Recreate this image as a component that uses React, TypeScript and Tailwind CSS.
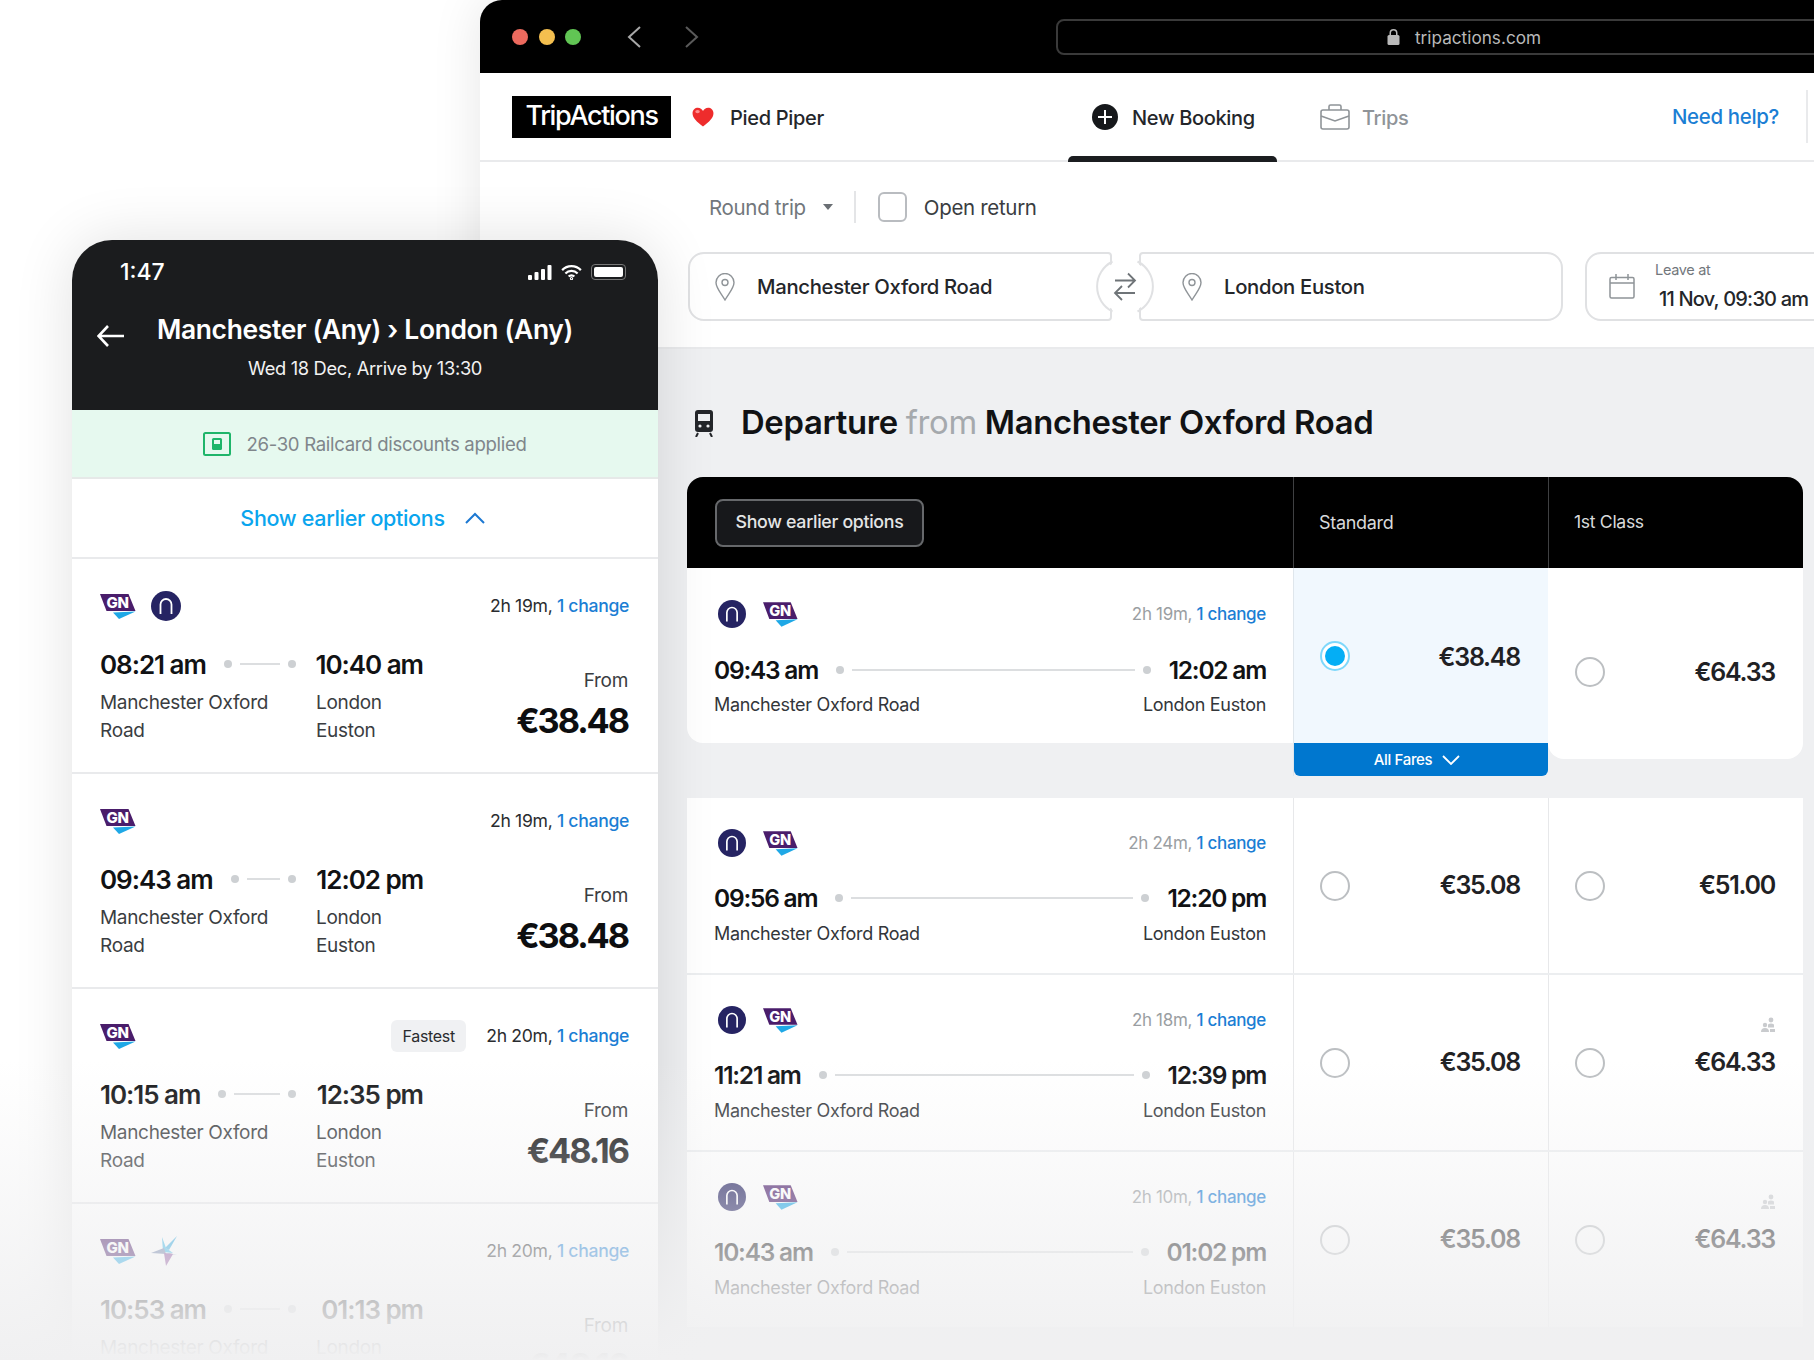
import React from "react";

const GN = ({ className = "w-[36px] h-[25px]" }: { className?: string }) => (
  <svg viewBox="0 0 36 25" className={className}>
    <polygon points="0,0 28.5,0 35.5,17 6.5,17" fill="#4a1d6b" />
    <polygon points="13,18.500 35.5,17.500 19,25" fill="#1fa8e6" />
    <text x="17.500" y="14" textAnchor="middle" fontSize="15" fontWeight="800" fill="#fff" fontFamily="Inter, sans-serif">GN</text>
  </svg>
);

const NR = ({ className = "w-[28px] h-[28px]" }: { className?: string }) => (
  <svg viewBox="0 0 30 30" className={className}>
    <circle cx="15" cy="15" r="15" fill="#262463" />
    <path d="M9.5 23V13.5a5.5 5.5 0 0 1 11 0V23" fill="none" stroke="#fff" strokeWidth="1.8" />
  </svg>
);

const Star = () => (
  <svg viewBox="0 0 26 30" className="w-[26px] h-[30px]">
    <polygon points="26,0 18,14 14,12" fill="#2aa7e0" />
    <polygon points="11,1 15,12 22,17 12,16" fill="#35b6e8" />
    <polygon points="0,17 13,12 15,18" fill="#6b7fa8" />
    <polygon points="14,17 26,19 18,17" fill="#5c6fa5" />
    <polygon points="15,30 13,17 22,18" fill="#8a4b9a" />
  </svg>
);

const Pin = () => (
  <svg viewBox="0 0 20 28" className="w-[20px] h-[28px] shrink-0" fill="none" stroke="#8f9498" strokeWidth="1.4">
    <path d="M10 27C6 20 1 15 1 9.5a9 9 0 0 1 18 0C19 15 14 20 10 27Z" />
    <circle cx="10" cy="9.5" r="3" />
  </svg>
);

const Dur = ({ d, muted }: { d: string; muted?: boolean }) => (
  <span className={muted ? "text-[#9a9ea2]" : "text-[#2a2c2f]"}>
    {d}, <span className="text-[#1b7ed4] font-medium">1 change</span>
  </span>
);

const Radio = ({ on }: { on?: boolean }) =>
  on ? (
    <span className="w-[30px] h-[30px] mt-[1px] rounded-full border-[2px] border-[#7fd8fb] bg-white flex items-center justify-center">
      <span className="w-[20px] h-[20px] rounded-full bg-[#04aef5]" />
    </span>
  ) : (
    <span className="w-[30px] h-[30px] rounded-full border-[2px] border-[#bcbfc2] bg-white" />
  );

const Seats = () => (
  <svg viewBox="0 0 16 16" className="w-[16px] h-[16px] absolute top-[42px] right-[27px]" fill="#c9cbce">
    <circle cx="11" cy="3" r="2.4" />
    <path d="M8 7.5q3-2 6 0v3H8Z" />
    <circle cx="5" cy="8" r="2.2" />
    <path d="M1 15q0-4 4-4t4 4Z" />
    <path d="M10 15v-3h5v3Z" />
  </svg>
);

const Trip = ({ d, a, b, tight }: { d: string; a: string; b: string; tight?: boolean }) => (
  <div className={tight ? "px-[27px] pt-[30px] h-full" : "px-[27px] pt-[31px] h-full"}>
    <div className="flex items-center justify-between h-[30px]">
      <div className="flex items-center gap-[17px] pl-[4px]">
        <NR />
        <GN className="w-[35px] h-[25px]" />
      </div>
      <div className="text-[17px] mt-[1px]"><Dur d={d} muted /></div>
    </div>
    <div className={tight ? "flex items-center mt-[26px] h-[28px]" : "flex items-center mt-[27px] h-[28px]"}>
      <span className="text-[24.500px] tracking-[-0.05em] font-semibold text-[#111214]">{a}</span>
      <span className="w-[8px] h-[8px] rounded-full bg-[#cdd0d3] ml-[18px]" />
      <span className="flex-1 h-[2px] bg-[#dcdee0] mx-[8px]" />
      <span className="w-[8px] h-[8px] rounded-full bg-[#cdd0d3] mr-[18px]" />
      <span className="text-[24.500px] tracking-[-0.05em] font-semibold text-[#111214]">{b}</span>
    </div>
    <div className={tight ? "flex justify-between mt-[10px] text-[18px] leading-[24px] text-[#33363a]" : "flex justify-between mt-[9px] text-[18px] leading-[24px] text-[#33363a]"}>
      <span>Manchester Oxford Road</span>
      <span>London Euston</span>
    </div>
  </div>
);

const Price = ({ v, lift }: { v: string; lift?: boolean }) => (
  <span className={lift ? "mt-[4px] text-[25px] tracking-[-0.05em] font-semibold text-[#1f2124]" : "mt-[1px] text-[25px] tracking-[-0.05em] font-semibold text-[#1f2124]"}>€{v}</span>
);

const Row = ({ d, a, b, s, f, seats }: { d: string; a: string; b: string; s: string; f: string; seats?: boolean }) => (
  <div className="flex h-[177px] bg-white border-b-2 border-[#eceef0]">
    <div className="w-[606px]"><Trip tight d={d} a={a} b={b} /></div>
    <div className="w-[255px] border-l border-[#e7e8ea] flex items-center justify-between pl-[26px] pr-[28px]">
      <Radio />
      <Price v={s} />
    </div>
    <div className="relative w-[255px] border-l border-[#e7e8ea] flex items-center justify-between pl-[26px] pr-[28px]">
      {seats && <Seats />}
      <Radio />
      <Price v={f} />
    </div>
  </div>
);

const Card = ({ logos, badge, d, a, b, price }: { logos: React.ReactNode; badge?: boolean; d: string; a: string; b: string; price: string }) => (
  <div className="h-[215px] border-b-2 border-[#e9eaec] pl-[28px] pr-[29px] pt-[30px] bg-white">
    <div className="flex items-center h-[34px]">
      <div className="flex items-center gap-[15px] flex-1">{logos}</div>
      {badge && <span className="bg-[#f0f1f3] rounded-[6px] h-[32px] w-[75px] flex items-center justify-center text-[16px] text-[#2a2c2f] mr-[20px]">Fastest</span>}
      <span className="text-[17.600px] mt-[1px]"><Dur d={d} /></span>
    </div>
    <div className="flex justify-between">
      <div className="w-[323px]">
        <div className="flex items-center mt-[23px] h-[36px]">
          <span className="text-[26px] tracking-[-0.04em] font-semibold text-[#111214]">{a}</span>
          <span className="flex-1 flex items-center justify-center pl-[18px]">
            <span className="w-[8px] h-[8px] rounded-full bg-[#cdd0d3]" />
            <span className="flex-1 h-[2px] bg-[#dcdee0] mx-[8px]" />
            <span className="w-[8px] h-[8px] rounded-full bg-[#cdd0d3]" />
          </span>
          <span className="w-[127px] pl-[16px] text-right text-[26px] tracking-[-0.04em] font-semibold text-[#111214] whitespace-nowrap">{b}</span>
        </div>
        <div className="flex mt-[7px] text-[19px] leading-[28px] text-[#3a3d41]">
          <span className="w-[216px]">Manchester Oxford<br />Road</span>
          <span>London<br />Euston</span>
        </div>
      </div>
      <div className="text-right pt-[44px] pr-[1px]">
        <div className="text-[19px] leading-[28px] text-[#3a3d41]">From</div>
        <div className="text-[34.300px] tracking-[-0.06em] leading-[46px] mt-[3px] font-bold text-[#0d0e10]">€{price}</div>
      </div>
    </div>
  </div>
);

export default function App() {
  return (
    <div className="relative w-[1814px] h-[1360px] overflow-hidden bg-white font-[Inter,sans-serif] tracking-[-0.02em]">
      {/* Browser window */}
      <div className="absolute left-[480px] top-0 w-[1400px] h-[1360px] rounded-tl-[22px] overflow-hidden flex flex-col shadow-[0_0_50px_rgba(0,0,0,0.1)] bg-white">
        <div className="h-[73px] shrink-0 bg-black flex items-center pl-[32px]">
          <div className="flex gap-[10.5px]">
            <span className="w-[16px] h-[16px] rounded-full bg-[#ec6a5e]" />
            <span className="w-[16px] h-[16px] rounded-full bg-[#f4bf4f]" />
            <span className="w-[16px] h-[16px] rounded-full bg-[#61c554]" />
          </div>
          <svg viewBox="0 0 14 22" className="w-[14px] h-[22px] ml-[46px]" fill="none" stroke="#a8a8a8" strokeWidth="2"><path d="M13 1 2 11l11 10" /></svg>
          <svg viewBox="0 0 14 22" className="w-[14px] h-[22px] ml-[44px]" fill="none" stroke="#5a5a5a" strokeWidth="2"><path d="m1 1 11 10L1 21" /></svg>
          <div className="ml-[357px] w-[816px] h-[36px] shrink-0 rounded-[8px] border-2 border-[#3a3a3a] flex items-center justify-center gap-[15px] text-[#b9b9b9] text-[17.200px] tracking-normal">
            <svg viewBox="0 0 13 16" className="w-[13px] h-[16px]" fill="#b9b9b9"><path d="M2.5 6V4a4 4 0 0 1 8 0v2h-1.5V4a2.5 2.5 0 0 0-5 0v2Z" /><rect x="0.5" y="6" width="12" height="10" rx="1.5" /></svg>
            <span className="mt-[2px]">tripactions.com</span>
          </div>
        </div>

        <div className="h-[89px] shrink-0 border-b-2 border-[#e9eaec] flex items-center pl-[32px]">
          <div className="w-[556px] shrink-0 flex items-center">
            <div className="w-[159px] h-[42px] bg-black text-white text-[27px] font-medium flex items-center justify-center tracking-[-0.05em]">TripActions</div>
            <svg viewBox="0 0 24 22" className="w-[22px] h-[20px] ml-[21px]"><path d="M12 21.5C5 16 0.5 12 0.5 6.8 0.5 3 3.4.8 6.4.8 8.8.8 11 2.2 12 4.5 13 2.2 15.2.8 17.6.8c3 0 5.9 2.2 5.9 6C23.500 12 19 16 12 21.500Z" fill="#ee2c2c" /><ellipse cx="6" cy="5" rx="2.500" ry="1.800" fill="#ff8f8f" /></svg>
            <span className="ml-[16px] mt-[2px] text-[20px] font-medium text-[#24262a]">Pied Piper</span>
          </div>
          <div className="relative w-[209px] h-full shrink-0 flex items-center pl-[24px] gap-[14px]">
            <span className="w-[26px] h-[26px] rounded-full bg-[#16181b] flex items-center justify-center">
              <svg viewBox="0 0 14 14" className="w-[14px] h-[14px]" stroke="#fff" strokeWidth="2"><path d="M7 0v14M0 7h14" /></svg>
            </span>
            <span className="mt-[2px] text-[20px] font-medium text-[#24262a]">New Booking</span>
            <span className="absolute left-0 right-0 bottom-[-2px] h-[6px] bg-[#1b1d20] rounded-t-[5px]" />
          </div>
          <div className="w-[352px] shrink-0 ml-[43px] flex items-center gap-[12px]">
            <svg viewBox="0 0 30 26" className="w-[30px] h-[26px]" fill="none" stroke="#8f9498" strokeWidth="1.6"><rect x="1" y="6" width="28" height="19" rx="2" /><path d="M9 6V2.500A1.500 1.500 0 0 1 10.500 1h9A1.500 1.500 0 0 1 21 2.500V6M1 12l14 5 14-5" /></svg>
            <span className="mt-[2px] text-[20px] font-medium text-[#8f9498]">Trips</span>
          </div>
          <span className="w-[134px] shrink-0 mt-[2px] text-[20.400px] font-medium text-[#1b7ed4]">Need help?</span>
          <span className="w-[2px] h-[53px] bg-[#e9eaec]" />
        </div>

        <div className="shrink-0 h-[187px] border-b-2 border-[#e9eaec] bg-white flow-root">
          <div className="flex items-center h-[32px] mt-[29px] pl-[229px]">
            <span className="mt-[2px] text-[20.500px] text-[#72777c]">Round trip</span>
            <svg viewBox="0 0 10 6" className="w-[10px] h-[6px] ml-[17px]" fill="#6a6f74"><path d="M0 0h10L5 6Z" /></svg>
            <span className="w-[2px] h-[32px] bg-[#e4e5e7] ml-[21px]" />
            <span className="w-[29px] h-[30px] rounded-[6px] border-2 border-[#b9bcc0] ml-[22px]" />
            <span className="mt-[2px] text-[20.500px] text-[#3a3d41] ml-[17px]">Open return</span>
          </div>
          <div className="relative flex mt-[29px] pl-[208px] h-[69px]">
            <div className="w-[424px] h-full rounded-l-[16px] rounded-r-[4px] border-2 border-[#e0e1e3] flex items-center pl-[25px] gap-[22px]">
              <Pin /><span className="mt-[2px] text-[20.300px] font-medium text-[#24262a]">Manchester Oxford Road</span>
            </div>
            <div className="w-[424px] h-full ml-[27px] rounded-r-[16px] rounded-l-[4px] border-2 border-[#e0e1e3] flex items-center pl-[41px] gap-[22px]">
              <Pin /><span className="mt-[2px] text-[20.300px] font-medium text-[#24262a]">London Euston</span>
            </div>
            <div className="w-[280px] h-full ml-[22px] rounded-l-[16px] border-2 border-[#e0e1e3] flex items-center pl-[22px]">
              <svg viewBox="0 0 26 25" className="w-[26px] h-[25px]" fill="none" stroke="#8f9498" strokeWidth="1.5"><rect x="1" y="3.500" width="24" height="20.500" rx="1.500" /><path d="M1 9h24M7 0v6M19 0v6" /></svg>
              <div className="ml-[20px]">
                <div className="text-[14.500px] leading-[18px] text-[#72777c]">Leave at</div>
                <div className="text-[20px] tracking-[-0.04em] leading-[28px] mt-[6px] ml-[4px] font-medium text-[#24262a] whitespace-nowrap">11 Nov, 09:30 am</div>
              </div>
            </div>
            <svg viewBox="0 0 64 71" className="absolute left-[613px] top-[-1px] w-[64px] h-[71px]">
              <rect x="20" y="0" width="24" height="71" fill="#fff" />
              <circle cx="32" cy="35.500" r="26" fill="#fff" />
              <path d="M19.500 10.500a28 28 0 0 0 0 50M44.500 10.500a28 28 0 0 1 0 50" fill="none" stroke="#e0e1e3" strokeWidth="2" />
              <path d="M22 29.500h20m-7-7 7 7-7 7M42 42H22m7-7-7 7 7 7" fill="none" stroke="#6f7478" strokeWidth="1.800" />
            </svg>
          </div>
        </div>

        <div className="flex-1 bg-[#eff0f2] pl-[207px]">
          <div className="flex items-center h-[128px] pt-[20px] pl-[7px]">
            <svg viewBox="0 0 20 27" className="w-[20px] h-[27px]"><rect x="1" y="0" width="18" height="22" rx="3" fill="#24262a" /><rect x="4" y="4" width="12" height="7" fill="#eff0f2" /><circle cx="6" cy="16" r="1.600" fill="#eff0f2" /><circle cx="14" cy="16" r="1.600" fill="#eff0f2" /><path d="M4 23 2 27M16 23l2 4" stroke="#24262a" strokeWidth="2" /></svg>
            <h1 className="ml-[27px] text-[32.800px] font-semibold text-[#111214]">Departure <span className="font-normal text-[#a5a9ad]">from</span> Manchester Oxford Road</h1>
          </div>
          <div className="w-[1116px]">
            <div className="flex h-[91px] bg-black rounded-t-[16px] text-[#d9dadb] text-[18px]">
              <div className="w-[606px] flex items-center pl-[28px]">
                <span className="w-[209px] h-[48px] rounded-[8px] border-2 border-[#66686b] bg-[#17181b] flex items-center justify-center text-[#e4e5e6] text-[17.800px] font-medium">Show earlier options</span>
              </div>
              <div className="w-[255px] border-l border-[#3f4042] flex items-center pl-[25px]">Standard</div>
              <div className="w-[255px] border-l border-[#3f4042] flex items-center pl-[25px] text-[17.600px]">1st Class</div>
            </div>
            <div className="flex items-start h-[230px]">
              <div className="w-[606px] h-[175px] bg-white rounded-bl-[16px]">
                <Trip d="2h 19m" a="09:43 am" b="12:02 am" />
              </div>
              <div className="w-[255px] border-l border-[#dfe6ec]">
                <div className="h-[175px] bg-[#f1f8fe] flex items-center justify-between pl-[26px] pr-[28px]">
                  <Radio on />
                  <Price lift v="38.48" />
                </div>
                <div className="h-[33px] bg-[#0077cf] rounded-b-[6px] flex items-center justify-center gap-[10px] pr-[8px] text-white text-[15px] font-medium">
                  <span className="mt-[2px]">All Fares</span>
                  <svg viewBox="0 0 18 10" className="w-[18px] h-[10px]" fill="none" stroke="#fff" strokeWidth="1.800"><path d="m1 1 8 8 8-8" /></svg>
                </div>
              </div>
              <div className="w-[255px] h-[191px] bg-white rounded-b-[16px] flex items-center justify-between pl-[27px] pr-[28px] pt-[17px]">
                <Radio />
                <Price v="64.33" />
              </div>
            </div>
            <Row d="2h 24m" a="09:56 am" b="12:20 pm" s="35.08" f="51.00" />
            <Row d="2h 18m" a="11:21 am" b="12:39 pm" s="35.08" f="64.33" seats />
            <Row d="2h 10m" a="10:43 am" b="01:02 pm" s="35.08" f="64.33" seats />
          </div>
        </div>
      </div>

      {/* Phone */}
      <div className="absolute left-[72px] top-[240px] w-[586px] h-[1120px] rounded-t-[40px] overflow-hidden bg-white shadow-[0_0_60px_rgba(0,0,0,0.12)]">
        <div className="h-[170px] pt-[18px] bg-[#1b1c1e] text-white">
          <div className="flex items-center justify-between h-[28px] pl-[48px] pr-[32px]">
            <span className="mt-[1px] text-[23px] font-medium tracking-normal">1:47</span>
            <span className="flex items-center gap-[9px]">
              <svg viewBox="0 0 24 15" className="w-[24px] h-[15px]" fill="#fff"><rect x="0" y="10" width="4" height="5" rx="1" /><rect x="6.500" y="7" width="4" height="8" rx="1" /><rect x="13" y="4" width="4" height="11" rx="1" /><rect x="19.500" y="0" width="4" height="15" rx="1" /></svg>
              <svg viewBox="0 0 22 16" className="w-[21px] h-[15px]" fill="none" stroke="#fff" strokeWidth="2.400"><path d="M1 5.500a14 14 0 0 1 20 0M4.500 9a9 9 0 0 1 13 0M8 12.300a4 4 0 0 1 6 0" /><circle cx="11" cy="14.500" r="0.600" /></svg>
              <span className="w-[35px] h-[16px] rounded-[4px] border border-[#777] p-[2px]"><span className="block w-full h-full rounded-[2px] bg-white" /></span>
            </span>
          </div>
          <div className="relative mt-[25px] text-center text-[26.400px] leading-[36px] font-semibold">
            <svg viewBox="0 0 27 22" className="absolute left-[25px] top-[14px] w-[27px] h-[22px]" fill="none" stroke="#fff" strokeWidth="2.600"><path d="M27 11H2M11 1 1.500 11 11 21" /></svg>
            Manchester (Any) › London (Any)
          </div>
          <div className="mt-[8px] text-center text-[18.300px] leading-[26px] text-[#f2f2f2]">Wed 18 Dec, Arrive by 13:30</div>
        </div>
        <div className="h-[69px] bg-[#e6f9ef] border-b-2 border-[#e6e9e8] flex items-center justify-center gap-[15px] text-[18.600px] text-[#80868b]">
          <svg viewBox="0 0 28 24" className="w-[28px] h-[24px]" fill="none"><rect x="1" y="1" width="26" height="22" rx="1.500" stroke="#1fb56a" strokeWidth="2" /><rect x="9" y="6" width="10" height="12" rx="1.500" fill="#1fb56a" /><rect x="11" y="8" width="6" height="4" fill="#e6f9ef" /></svg>
          <span className="mt-[2px]">26-30 Railcard discounts applied</span>
        </div>
        <div className="h-[80px] border-b-2 border-[#e9eaec] flex items-center justify-center gap-[20px] pr-[5px] text-[21.500px] font-medium text-[#0aa5ee]">
          <span className="mt-[1px]">Show earlier options</span>
          <svg viewBox="0 0 20 12" className="w-[20px] h-[12px]" fill="none" stroke="#1c78d2" strokeWidth="2"><path d="m1 11 9-9 9 9" /></svg>
        </div>
        <Card logos={<><GN /><NR className="w-[30px] h-[30px]" /></>} d="2h 19m" a="08:21 am" b="10:40 am" price="38.48" />
        <Card logos={<GN />} d="2h 19m" a="09:43 am" b="12:02 pm" price="38.48" />
        <Card logos={<GN />} badge d="2h 20m" a="10:15 am" b="12:35 pm" price="48.16" />
        <Card logos={<><GN /><Star /></>} d="2h 20m" a="10:53 am" b="01:13 pm" price="48.16" />
      </div>

      {/* Bottom fade */}
      <div className="absolute inset-x-0 bottom-0 h-[300px] bg-gradient-to-b from-[#f0f0f100] to-[#f0f0f1]" />
    </div>
  );
}
